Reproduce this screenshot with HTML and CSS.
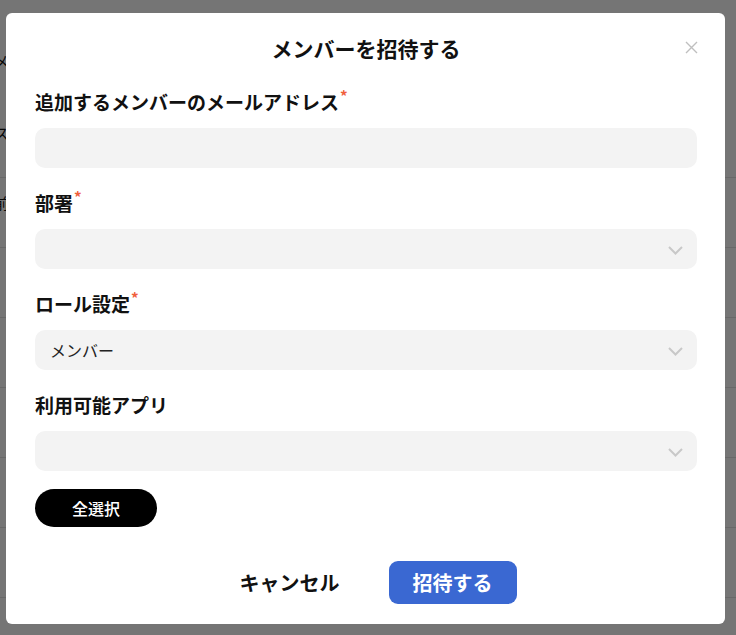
FILE: index.html
```html
<!DOCTYPE html>
<html lang="ja">
<head>
	<meta charset="UTF-8">
	<title>メンバーを招待する</title>
	<link rel="stylesheet" href="styles.css">
</head>
<body>
	<!-- page behind the dialog -->
	<main class="page">
		<div class="page-head">メ</div>
		<div class="page-row">ス</div>
		<div class="page-row">前</div>
		<div class="page-row">-</div>
		<div class="page-row">:</div>
		<div class="page-row">-</div>
		<div class="page-row">:</div>
		<div class="page-row">-</div>
	</main>

	<section class="overlay">
		<div class="modal">
			<header class="modal-head">
				<h2>メンバーを招待する</h2>
				<button class="close" type="button">
					<svg width="13" height="13" viewBox="0 0 13 13"><path d="M1 1L12 12M12 1L1 12" stroke="#bfbfbf" stroke-width="1.4" fill="none"/></svg>
				</button>
			</header>

			<div class="field">
				<label>追加するメンバーのメールアドレス<span class="req">*</span></label>
				<input class="input" type="text">
			</div>
			<div class="field">
				<label>部署<span class="req">*</span></label>
				<div class="select">
					<span></span>
					<svg width="15" height="9" viewBox="0 0 15 9"><polyline points="1,1 7.5,7.5 14,1" stroke="#c8c8c8" stroke-width="2" fill="none"/></svg>
				</div>
			</div>
			<div class="field">
				<label>ロール設定<span class="req">*</span></label>
				<div class="select">
					<span>メンバー</span>
					<svg width="15" height="9" viewBox="0 0 15 9"><polyline points="1,1 7.5,7.5 14,1" stroke="#c8c8c8" stroke-width="2" fill="none"/></svg>
				</div>
			</div>
			<div class="field last">
				<label>利用可能アプリ</label>
				<div class="select">
					<span></span>
					<svg width="15" height="9" viewBox="0 0 15 9"><polyline points="1,1 7.5,7.5 14,1" stroke="#c8c8c8" stroke-width="2" fill="none"/></svg>
				</div>
			</div>

			<button class="btn-all" type="button">全選択</button>

			<footer class="modal-foot">
				<button class="btn-cancel" type="button">キャンセル</button>
				<button class="btn-invite" type="button">招待する</button>
			</footer>
		</div>
	</section>
</body>
</html>
```

FILE: styles.css
```css
* {
	box-sizing: border-box;
}
body {
	background: #fff;
	color: #111;
	font-family: "Noto Sans CJK JP", "Noto Sans", sans-serif;
	margin: 0px;
}
/* page behind */
main.page .page-head {
	font-size: 15px;
	height: 108px;
	padding: 50px 0px 0px 0px;
	margin-left: -6px;
}
main.page .page-row {
	border-bottom: 1px solid #e2e2e2;
	font-size: 15px;
	height: 70px;
	margin-left: -6px;
	padding-top: 14px;
}

/* overlay + modal */
section.overlay {
	background-color: rgba(0,0,0,.54);
	height: 100%;
	position: fixed;
	top: 0px; left: 0px;
	width: 100%;
	padding: 13px 11px 11px 6px;
}
.modal {
	background: #fff;
	border-radius: 6px;
	display: flex;
	flex-direction: column;
	padding: 20px 28px 20px 29px;
	width: 719px;
}
.modal-head {
	height: 30px;
	margin-bottom: 27px;
	position: relative;
}
.modal-head h2 {
	font-size: 21px;
	font-weight: 700;
	line-height: 30px;
	margin: 0px;
	text-align: center;
}
.modal-head .close {
	background: none;
	border: none;
	padding: 0px;
	position: absolute;
	top: 8px; right: -1px;
	line-height: 0;
}

.field {
	display: flex;
	flex-direction: column;
	margin-bottom: 23px;
}
.field.last {
	margin-bottom: 0px;
}
.field label {
	display: block;
	font-size: 19px;
	font-weight: 700;
	height: 24px;
	line-height: 24px;
	margin-bottom: 14px;
}
.field label .req {
	color: #f0603c;
	font-size: 15px;
	line-height: 1;
	margin-left: 1px;
	vertical-align: top;
	position: relative;
	top: -2px;
}
.input {
	background: #f3f3f3;
	border: none;
	border-radius: 10px;
	display: block;
	height: 40px;
	outline: none;
	padding: 0px;
	width: 100%;
}
.select {
	align-items: center;
	background: #f3f3f3;
	border-radius: 10px;
	display: flex;
	font-size: 16px;
	color: #222;
	height: 40px;
	justify-content: space-between;
	padding: 0px 14px 0px 15px;
}
.select svg {
	margin-top: 2px;
}

.btn-all {
	align-self: flex-start;
	background: #000;
	border: none;
	border-radius: 19px;
	color: #fff;
	font-family: inherit;
	font-size: 16px;
	font-weight: 500;
	height: 38px;
	margin-top: 18px;
	padding: 0px 37px;
}

.modal-foot {
	display: flex;
	gap: 25px;
	justify-content: center;
	margin-top: 34px;
}
.modal-foot button {
	border: none;
	font-family: inherit;
	font-size: 20px;
	font-weight: 700;
	height: 43px;
	padding: 0px 24px;
}
.btn-cancel {
	background: #fff;
	color: #111;
}
.btn-invite {
	background: #3a68d2;
	border-radius: 9px;
	color: #fff;
}
```
